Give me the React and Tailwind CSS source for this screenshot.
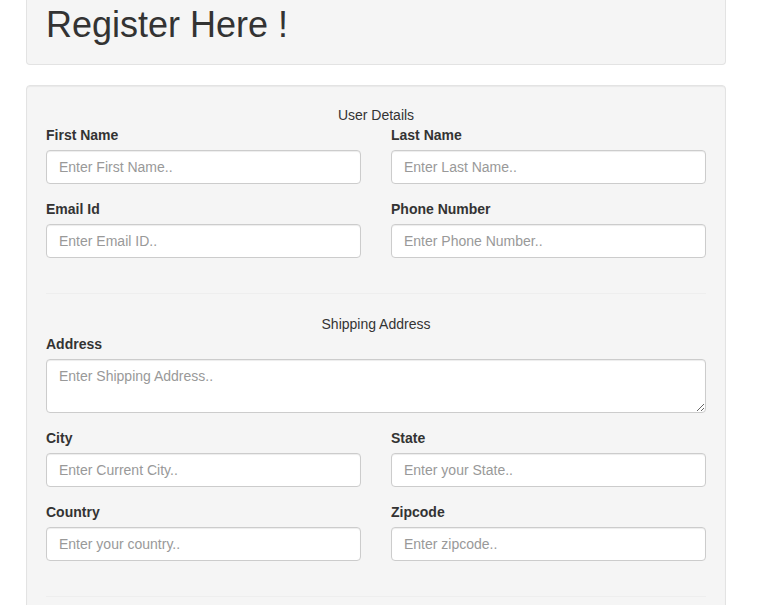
const Field = ({ label, placeholder }) => (
  <div className="mb-[15px]">
    <label className="mb-[5px] block font-bold leading-5">{label}</label>
    <input
      type="text"
      placeholder={placeholder}
      className="block h-[34px] w-full rounded border border-[#ccc] bg-white px-3 py-[6px] text-sm text-[#555] shadow-[inset_0_1px_1px_rgba(0,0,0,0.075)] outline-none placeholder:text-[#999]"
    />
  </div>
)

const Row = ({ children }) => <div className="grid grid-cols-2 gap-x-[30px]">{children}</div>

const Heading = ({ children }) => <p className="text-center leading-5">{children}</p>

export default function App() {
  return (
    <div
      className="min-h-screen bg-white text-sm leading-5 text-[#333]"
      style={{ fontFamily: '"Liberation Sans", Arial, sans-serif' }}
    >
      <div className="mx-[26px] w-[700px]">
        <div className="mb-5 rounded-b border border-t-0 border-[#e3e3e3] bg-[#f5f5f5] px-[19px] pb-[19px] pt-[5px]">
          <h1 className="text-[36px] font-normal leading-[40px]">Register Here !</h1>
        </div>

        <div className="rounded border border-[#e3e3e3] bg-[#f5f5f5] p-[19px] pb-[60px] shadow-[inset_0_1px_1px_rgba(0,0,0,0.05)]">
          <Heading>User Details</Heading>
          <Row>
            <Field label="First Name" placeholder="Enter First Name.." />
            <Field label="Last Name" placeholder="Enter Last Name.." />
            <Field label="Email Id" placeholder="Enter Email ID.." />
            <Field label="Phone Number" placeholder="Enter Phone Number.." />
          </Row>

          <hr className="my-5 border-t border-[#eee]" />

          <Heading>Shipping Address</Heading>
          <div className="mb-[15px]">
            <label className="mb-[5px] block font-bold leading-5">Address</label>
            <textarea
              rows={2}
              placeholder="Enter Shipping Address.."
              className="block h-[54px] w-full resize-y rounded border border-[#ccc] bg-white px-3 py-[6px] text-sm leading-5 text-[#555] shadow-[inset_0_1px_1px_rgba(0,0,0,0.075)] outline-none placeholder:text-[#999]"
            />
          </div>
          <Row>
            <Field label="City" placeholder="Enter Current City.." />
            <Field label="State" placeholder="Enter your State.." />
            <Field label="Country" placeholder="Enter your country.." />
            <Field label="Zipcode" placeholder="Enter zipcode.." />
          </Row>

          <hr className="my-5 border-t border-[#eee]" />
        </div>
      </div>
    </div>
  )
}
